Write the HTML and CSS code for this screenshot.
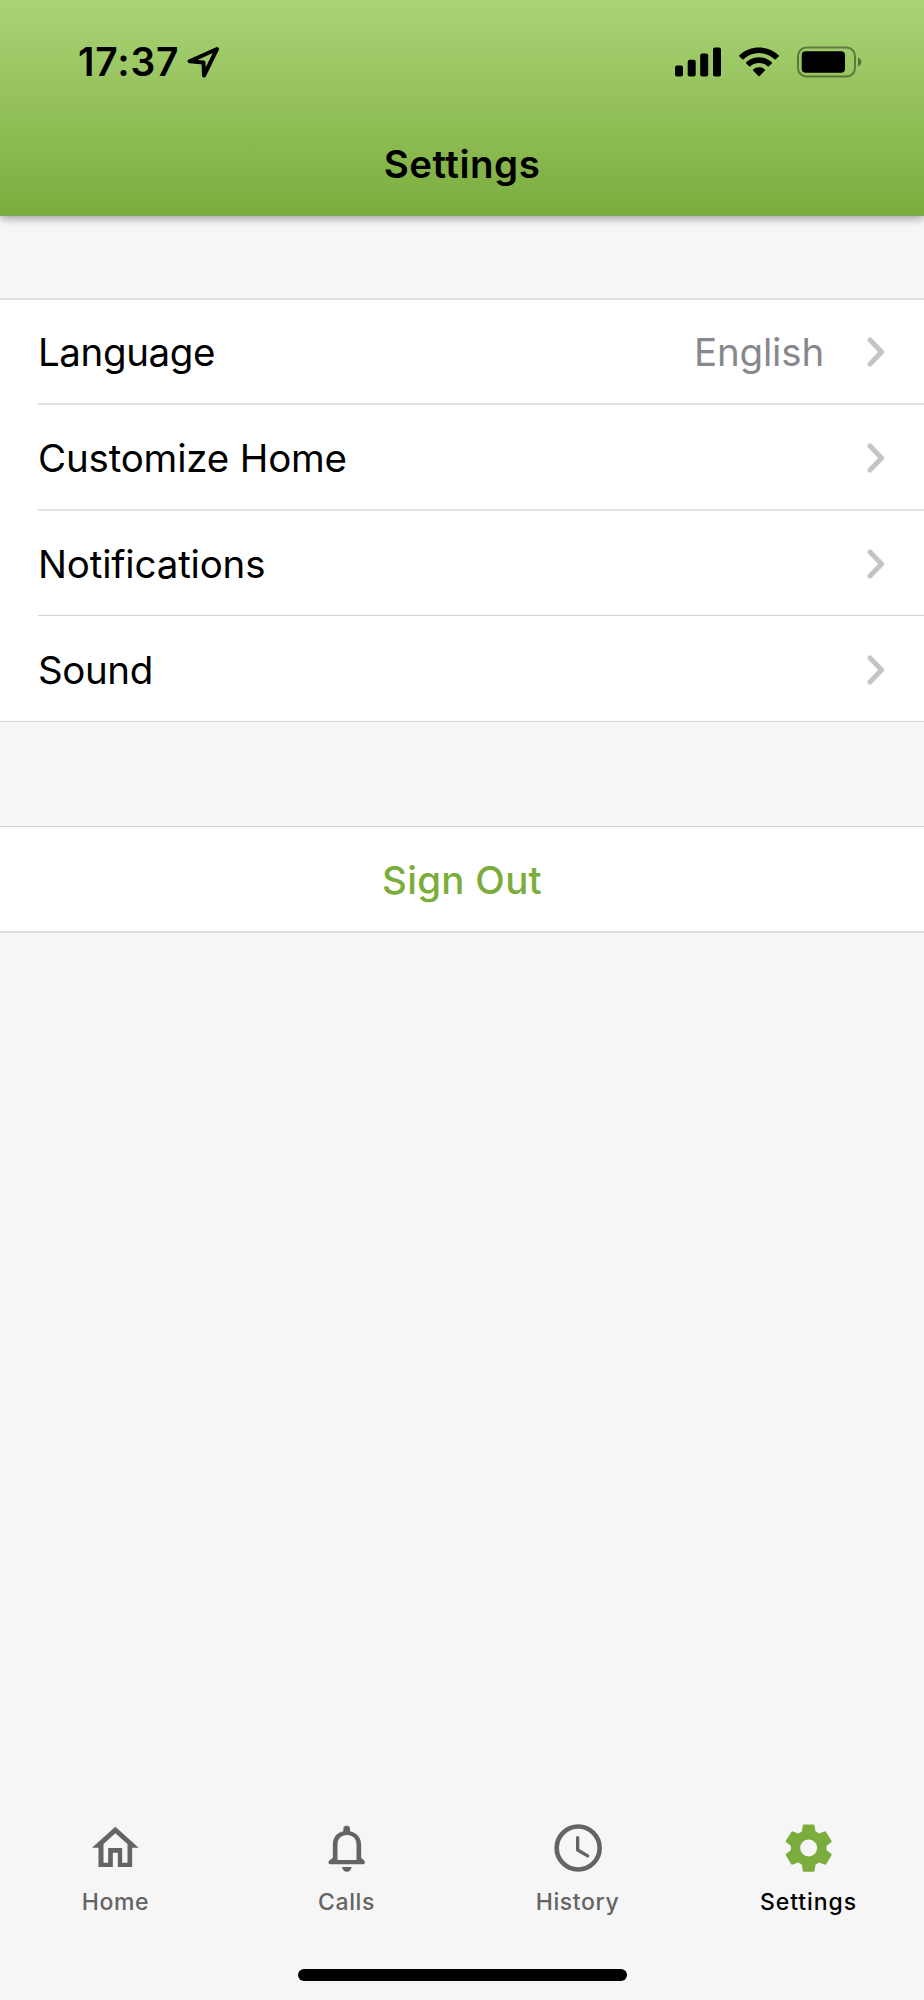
FILE: index.html
```html
<!DOCTYPE html>
<html lang="en">
<head>
<meta charset="utf-8">
<title>Settings</title>
<link rel="stylesheet" href="styles.css">
</head>
<body>
<div class="screen">
  <header class="header">
    <div class="status">
      <div class="status-left">
        <span class="time">17:37</span>
        <svg class="arrow" width="34" height="34" viewBox="0 0 34 34"><path d="M31 4 3.500 16.300 17.500 17.500 18 30.500Z" fill="none" stroke="#000" stroke-width="4" stroke-linejoin="round"/></svg>
      </div>
      <div class="status-right">
        <svg width="46" height="30" viewBox="0 0 46 30"><rect y="18.500" width="8" height="11" rx="2"/><rect x="12.700" y="12.700" width="8" height="16.800" rx="2"/><rect x="25.200" y="6.500" width="8" height="23" rx="2"/><rect x="38" y=".5" width="8" height="29" rx="2"/></svg>
        <svg width="40" height="30" viewBox="0 0 40 30"><path d="M.4 8.300C11.500-2 28.500-2 39.600 8.300q.6.600 0 1.200L36.700 12.300q-.6.500-1.200 0C26.500 4 13.500 4 4.500 12.300q-.6.500-1.200 0L.4 9.500q-.6-.6 0-1.200ZM7.200 15.200C14.500 8.500 25.500 8.500 32.800 15.200q.6.600 0 1.200L29.900 19.200q-.6.500-1.200 0C23.600 14.900 16.400 14.900 11.300 19.200q-.6.500-1.200 0L7.200 16.400q-.6-.6 0-1.200ZM14.100 22.400c3.300-2.900 8.500-2.900 11.800 0q.6.600 0 1.200L20.600 29q-.6.600-1.200 0L14.100 23.600q-.6-.6 0-1.200Z"/></svg>
        <svg width="65" height="32" viewBox="0 0 65 32"><rect x="1" y="1.500" width="57" height="29" rx="8.500" fill="none" stroke="#000" stroke-opacity=".4" stroke-width="2"/><rect x="4.700" y="5.200" width="43.300" height="21.500" rx="4"/><path d="M61 11.500c4.500 2 4.500 7 0 9Z" opacity=".45"/></svg>
      </div>
    </div>
    <h1 class="title">Settings</h1>
  </header>

  <main class="content">
    <ul class="list">
      <li class="row"><span class="label tight">Language</span><span class="value">English</span><svg class="chevron" width="18" height="30" viewBox="0 0 18 30"><path d="M3 3 14.600 15 3 27"/></svg></li>
      <li class="row"><span class="label">Customize Home</span><svg class="chevron" width="18" height="30" viewBox="0 0 18 30"><path d="M3 3 14.600 15 3 27"/></svg></li>
      <li class="row"><span class="label">Notifications</span><svg class="chevron" width="18" height="30" viewBox="0 0 18 30"><path d="M3 3 14.600 15 3 27"/></svg></li>
      <li class="row"><span class="label tight">Sound</span><svg class="chevron" width="18" height="30" viewBox="0 0 18 30"><path d="M3 3 14.600 15 3 27"/></svg></li>
    </ul>
    <button class="signout">Sign Out</button>
  </main>

  <nav class="tabs">
    <a class="tab"><svg width="48" height="48" viewBox="2 0 144 144"><path fill-rule="evenodd" d="M72 8.500 142 71H122.500V129H79.500V86H64.500V129H21.500V71H2ZM72 28 36.500 60V116H50.500V72H92.500V116H108.500V60Z"/></svg><span>Home</span></a>
    <a class="tab"><svg width="48" height="48" viewBox="1 0 144 144"><path fill-rule="evenodd" d="M62 22V15a10 10 0 0 1 20 0V22C102 26 115.500 41 115.500 62V101L125 110Q128 114 126 118 124.500 121 121 121H23Q19.500 121 18 118 16 114 19 110L30.500 101V62C30.500 41 42 26 62 22ZM44.500 108H101.500V62C101.500 44 90 33 73 33S44.500 44 44.500 62Z"/><path d="M58 129H87Q84 143.500 72.500 143.500T58 129Z"/></svg><span>Calls</span></a>
    <a class="tab"><svg width="48" height="48" viewBox="0 0 144 144"><g fill="none" stroke="#646464" stroke-linecap="round" stroke-linejoin="round"><circle cx="72.500" cy="72" r="64.500" stroke-width="14"/><path d="M71 41V78L101 95.500" stroke-width="10"/></g></svg><span>History</span></a>
    <a class="tab active"><svg width="48" height="48" viewBox="1 0 144 144"><path fill-rule="evenodd" d="M57 1.500H87L89.500 3.500 92.500 22 103 28.500 121 22 123.500 23 141 51 140.500 54 125.500 65V79L140.500 90 141 93 124.500 121 121.500 122 103 115.500 92.500 122 89.500 141.500 87 143.500H57L54.500 141.500 51.500 122 41 115.500 22.500 122 19.500 121 3 93 3.500 90 18.500 79V65L3.500 54 3 51 20.500 23 23 22 41 28.500 51.500 22 54.500 3.500ZM72 46.500A25.500 25.500 0 1 0 72 97.500 25.500 25.500 0 1 0 72 46.500Z"/></svg><span>Settings</span></a>
  </nav>
  <div class="indicator"></div>
</div>
</body>
</html>
```
FILE: styles.css
```css
* { box-sizing: border-box; }
body { margin: 0; background: #f6f6f6; font-family: Inter, "Liberation Sans", sans-serif; color: #000; }
.screen { width: 924px; height: 2000px; display: flex; flex-direction: column; background: #f6f6f6; overflow: hidden; }
svg { display: block; flex: none; }

.header { height: 216px; flex: none; background: linear-gradient(#aad376, #7bad3e); border-bottom: 1px solid #80a850; box-shadow: 0 2px 9px rgba(0, 0, 0, .4); }
.status { height: 124px; padding: 0 62px 0 78px; display: flex; align-items: center; justify-content: space-between; }
.status-left { display: flex; align-items: center; }
.time { font-size: 39px; font-weight: 600; line-height: 48px; letter-spacing: .8px; }
.arrow { margin-left: 7px; }
.status-right { display: flex; align-items: center; gap: 18px; }
.title { margin: 0; font-size: 38.5px; font-weight: 600; line-height: 80px; text-align: center; letter-spacing: .5px; }

.content { flex: 1; padding-top: 82px; }
.list { list-style: none; margin: 0 0 104px; padding: 0 0 0 38px; height: 424px; background: #fff; border-top: 2px solid #dedede; border-bottom: 1px solid #d2d2d2; display: grid; grid-template-rows: 105px 106px 105px 105px; }
.row { display: flex; align-items: center; padding: 1px 39px 0 0; font-size: 38.5px; letter-spacing: -.18px; border-bottom: 2px solid #e2e2e2; }
.row:nth-child(3) { border-bottom: 1px solid #d4d4d4; padding-top: 2px; }
.row:last-child { border-bottom: 0; padding-top: 2px; }
.tight { letter-spacing: -.4px; }
.value { margin-left: auto; color: #88888c; }
.chevron { margin-left: auto; fill: none; stroke: #c4c4c6; stroke-width: 5px; stroke-linecap: round; stroke-linejoin: round; }
.value + .chevron { margin-left: 43px; }
.signout { display: block; width: 100%; height: 107px; padding: 2px 0 0; border: 0; border-top: 1px solid #d2d2d2; border-bottom: 2px solid #dedede; background: #fff; color: #7bad3b; font: 500 38.5px/102px Inter, "Liberation Sans", sans-serif; letter-spacing: .3px; }

.tabs { height: 138px; flex: none; display: grid; grid-template-columns: repeat(4, 1fr); }
.tab { display: flex; flex-direction: column; align-items: center; gap: 14px; fill: #646464; color: #646464; font-size: 23px; font-weight: 500; line-height: 32px; letter-spacing: .6px; }
.active { fill: #7bad3e; color: #000; letter-spacing: .9px; }
.indicator { width: 329px; height: 12px; flex: none; margin: 7px auto 19px; border-radius: 6px; background: #000; }
```
